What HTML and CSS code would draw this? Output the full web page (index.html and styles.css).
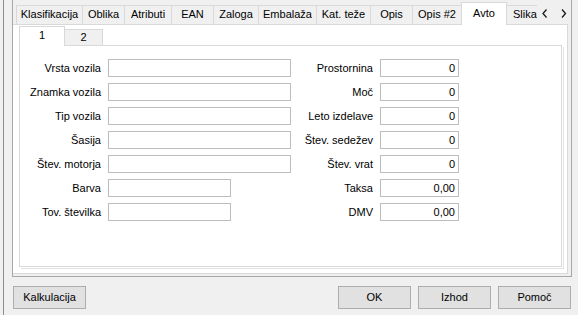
FILE: index.html
```html
<!DOCTYPE html>
<html>
<head>
<meta charset="utf-8">
<link rel="stylesheet" href="styles.css">
</head>
<body>
<div class="window">
  <div class="frame">
    <div class="tabstrip">
      <div class="tab w-klas">Klasifikacija</div>
      <div class="tab w-obl">Oblika</div>
      <div class="tab w-atr">Atributi</div>
      <div class="tab w-ean">EAN</div>
      <div class="tab w-zal">Zaloga</div>
      <div class="tab w-emb">Embalaža</div>
      <div class="tab w-kat">Kat. teže</div>
      <div class="tab w-opis">Opis</div>
      <div class="tab w-opis2">Opis #2</div>
      <div class="tab active w-avto">Avto</div>
      <div class="tab w-slika">Slika</div>
      <div class="arrows">
        <svg class="arr arr-l" width="6" height="9" viewBox="0 0 6 9"><polyline points="4.5,0.5 1,4.5 4.5,8.5" fill="none" stroke="#1a1a1a" stroke-width="1.3"/></svg>
        <svg class="arr arr-r" width="6" height="9" viewBox="0 0 6 9"><polyline points="1,0.5 4.5,4.5 1,8.5" fill="none" stroke="#1a1a1a" stroke-width="1.3"/></svg>
      </div>
    </div>
    <div class="pane">
      <div class="subtabs">
        <div class="stab active w-s1">1</div>
        <div class="stab w-s2">2</div>
      </div>
      <div class="subpane">
        <div class="form">
          <div class="lbl">Vrsta vozila</div><div class="field"></div>
          <div class="lbl">Prostornina</div><div class="field num">0</div>

          <div class="lbl">Znamka vozila</div><div class="field"></div>
          <div class="lbl">Moč</div><div class="field num">0</div>

          <div class="lbl">Tip vozila</div><div class="field"></div>
          <div class="lbl">Leto izdelave</div><div class="field num">0</div>

          <div class="lbl">Šasija</div><div class="field"></div>
          <div class="lbl">Štev. sedežev</div><div class="field num">0</div>

          <div class="lbl">Štev. motorja</div><div class="field"></div>
          <div class="lbl">Štev. vrat</div><div class="field num">0</div>

          <div class="lbl">Barva</div><div class="field short"></div>
          <div class="lbl">Taksa</div><div class="field num">0,00</div>

          <div class="lbl">Tov. številka</div><div class="field short"></div>
          <div class="lbl">DMV</div><div class="field num">0,00</div>
        </div>
      </div>
    </div>
  </div>
  <div class="buttons">
    <div class="btn">Kalkulacija</div>
    <div class="right-btns">
      <div class="btn">OK</div>
      <div class="btn">Izhod</div>
      <div class="btn">Pomoč</div>
    </div>
  </div>
</div>
</body>
</html>
```
FILE: styles.css
```css
html, body {
  margin: 0;
  padding: 0;
}
body {
  background: #f0f0f0;
  font-family: "Liberation Sans", Arial, sans-serif;
  font-size: 11px;
  color: #000;
  width: 578px;
  height: 315px;
  overflow: hidden;
}
.window {
  margin-left: 3px;
  border-left: 1px solid #8e8e8e;
  height: 315px;
  box-sizing: border-box;
  padding-left: 8px;
  width: 569px;
}
.frame {
  width: 560px;
  height: 277px;
  box-sizing: border-box;
  border-left: 1px solid #a8a8a8;
  border-right: 1px solid #a8a8a8;
  border-bottom: 1px solid #a8a8a8;
  display: flex;
  flex-direction: column;
}
.tabstrip {
  height: 24px;
  flex: none;
  position: relative;
  display: flex;
  align-items: flex-end;
  padding-left: 3px;
}
.tab {
  height: 19px;
  box-sizing: border-box;
  border: 1px solid #d9d9d9;
  border-bottom: none;
  margin-right: -1px;
  text-align: center;
  line-height: 17px;
  background: #f0f0f0;
  white-space: nowrap;
  overflow: hidden;
  flex: none;
}
.tab.active {
  height: 23px;
  margin-bottom: -1px;
  background: #fff;
  position: relative;
  z-index: 2;
  line-height: 20px;
}
.w-klas { width: 67px; }
.w-obl { width: 43px; }
.w-atr { width: 48px; }
.w-ean { width: 43px; }
.w-zal { width: 46px; }
.w-emb { width: 59px; }
.w-kat { width: 55px; }
.w-opis { width: 43px; }
.w-opis2 { width: 50px; }
.w-avto { width: 46px; }
.w-slika { width: 40px; text-align: left; padding-left: 6px; }
.arrows {
  position: absolute;
  right: 3px;
  top: 4px;
  width: 31px;
  height: 20px;
  background: #f0f0f0;
  z-index: 3;
}
.arr {
  position: absolute;
  top: 5px;
}
.arr-l { left: 5px; }
.arr-r { left: 24px; }
.pane {
  flex: 1;
  background: #fff;
  border-top: 1px solid #d9d9d9;
  border-right: 1px solid #d9d9d9;
  border-bottom: 1px solid #d9d9d9;
  margin: 0 3px 2px 0;
  padding: 1px 3px 4px 6px;
  display: flex;
  flex-direction: column;
  position: relative;
  z-index: 1;
}
.subtabs {
  height: 19px;
  flex: none;
  display: flex;
  align-items: flex-end;
}
.stab {
  box-sizing: border-box;
  border: 1px solid #d9d9d9;
  border-bottom: none;
  text-align: center;
  background: #f0f0f0;
  height: 16px;
  line-height: 15px;
  flex: none;
}
.stab.active {
  height: 20px;
  margin-bottom: -1px;
  margin-right: -1px;
  background: #fff;
  line-height: 17px;
  position: relative;
  z-index: 2;
}
.w-s1 { width: 46px; }
.w-s2 { width: 39px; }
.subpane {
  flex: 1;
  border: 1px solid #d9d9d9;
  margin: 0 2px 2px 0;
  box-shadow: 1px 1px 0 #fff, 2px 2px 0 #e2e2e2;
  padding: 13px 0 0 0;
}
.form {
  display: grid;
  grid-template-columns: 88px 183px 89px 79px;
  grid-auto-rows: 18px;
  row-gap: 6px;
}
.lbl {
  text-align: right;
  padding-right: 7px;
  line-height: 18px;
  white-space: nowrap;
}
.field {
  box-sizing: border-box;
  border: 1px solid #bdbdbd;
  background: #fff;
  height: 18px;
  line-height: 16px;
}
.field.short {
  width: 123px;
}
.field.num {
  text-align: right;
  padding-right: 3px;
}
.buttons {
  width: 560px;
  margin-top: 9px;
  display: flex;
  padding: 0 1px;
  box-sizing: border-box;
}
.right-btns {
  margin-left: auto;
  display: flex;
  gap: 7px;
}
.btn {
  width: 73px;
  height: 23px;
  box-sizing: border-box;
  border: 1px solid #adadad;
  background: #e1e1e1;
  text-align: center;
  line-height: 21px;
}
```
